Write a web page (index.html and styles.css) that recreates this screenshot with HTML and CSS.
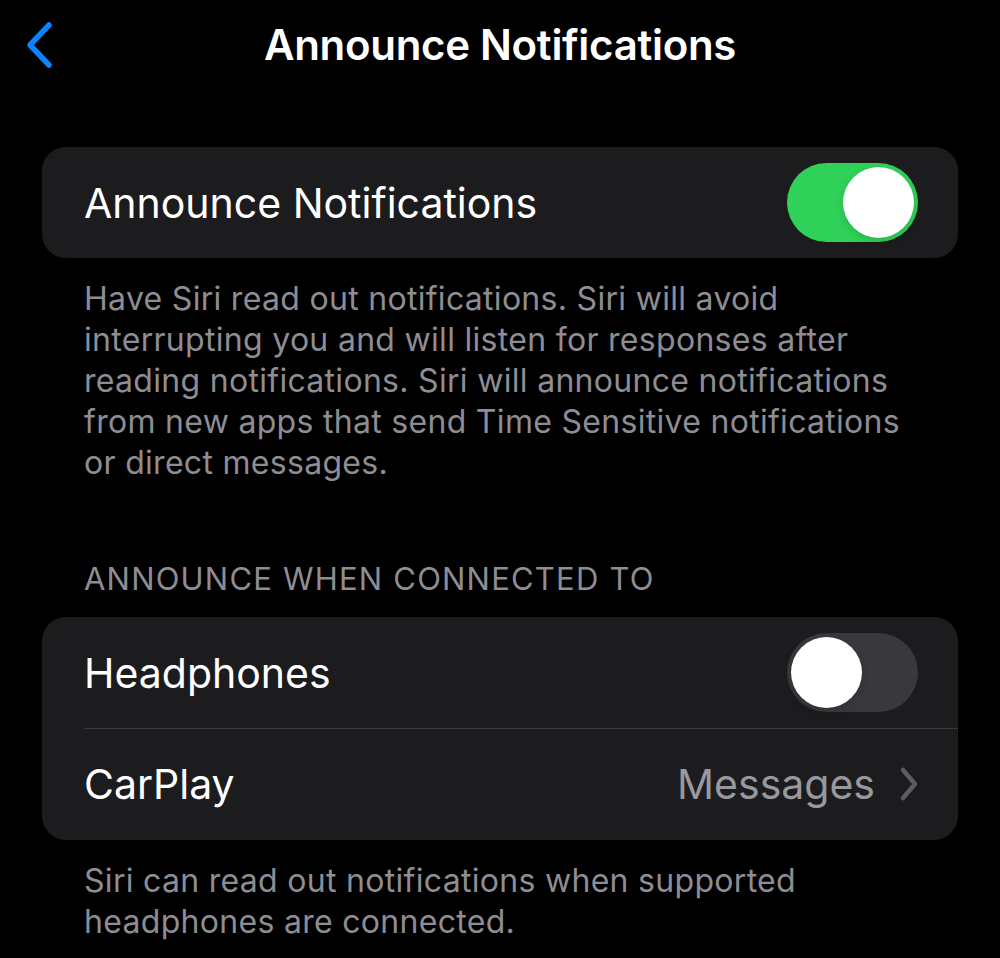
FILE: index.html
```html
<!DOCTYPE html>
<html lang="en">
<head>
    <meta charset="UTF-8">
    <meta name="viewport" content="width=device-width, initial-scale=1.0">
    <title>Announce Notifications</title>
    <link rel="stylesheet" href="styles.css">
</head>
<body>
    <div class="barra">
        <a class="atras" href="#">
            <svg width="34" height="52" viewBox="0 0 34 52">
                <path d="M27 6 L8 26 L27 46" fill="none" stroke="#0a84ff" stroke-width="5.5" stroke-linecap="round" stroke-linejoin="round"/>
            </svg>
        </a>
        <h1 class="titulo">Announce Notifications</h1>
    </div>

    <div class="grupo">
        <div class="fila">
            <span class="etiqueta">Announce Notifications</span>
            <div class="interruptor activo"><div class="perilla"></div></div>
        </div>
    </div>
    <p class="pie">Have Siri read out notifications. Siri will avoid interrupting you and will listen for responses after reading notifications. Siri will announce notifications from new apps that send Time Sensitive notifications or direct messages.</p>

    <div class="cabecera">ANNOUNCE WHEN CONNECTED TO</div>
    <div class="grupo">
        <div class="fila">
            <span class="etiqueta">Headphones</span>
            <div class="interruptor"><div class="perilla"></div></div>
        </div>
        <div class="fila">
            <span class="etiqueta">CarPlay</span>
            <span class="valor">Messages
                <svg width="20" height="36" viewBox="0 0 20 36">
                    <path d="M4 4 L16 18 L4 32" fill="none" stroke="#5b5b60" stroke-width="4.5" stroke-linecap="round" stroke-linejoin="round"/>
                </svg>
            </span>
        </div>
    </div>
    <p class="pie">Siri can read out notifications when supported headphones are connected.</p>
</body>
</html>
```

FILE: styles.css
```css
body {
    font-family: Inter, "Liberation Sans", sans-serif;
    background-color: #000;
    color: #fff;
    margin: 0;
    width: 1000px;
    height: 958px;
    overflow: hidden;
}

.barra {
    height: 92px;
    display: flex;
    align-items: center;
    justify-content: center;
    position: relative;
}

.atras {
    position: absolute;
    left: 22px;
    top: 19px;
    display: flex;
}

.titulo {
    margin: 0 0 3px;
    font-size: 42px;
    line-height: 50px;
    font-weight: 600;
    letter-spacing: -0.3px;
}

.grupo {
    background: #1c1c1e;
    border-radius: 24px;
    margin: 55px 42px 0;
    overflow: hidden;
}

.fila {
    height: 111px;
    display: flex;
    align-items: center;
    justify-content: space-between;
    padding: 0 40px 0 42px;
    position: relative;
}

.fila + .fila {
    height: 112px;
}

.fila + .fila::before {
    content: "";
    position: absolute;
    top: 0;
    left: 42px;
    right: 0;
    height: 1px;
    background: #38383a;
}

.etiqueta {
    font-size: 41px;
}

.interruptor {
    width: 131px;
    height: 79px;
    border-radius: 40px;
    background: #39393d;
    padding: 4px;
    box-sizing: border-box;
    display: flex;
}

.interruptor.activo {
    background: #30d158;
    justify-content: flex-end;
}

.perilla {
    width: 71px;
    height: 71px;
    border-radius: 50%;
    background: #fff;
    box-shadow: 0 3px 8px rgba(0, 0, 0, 0.15);
}

.valor {
    display: flex;
    align-items: center;
    gap: 24px;
    font-size: 41px;
    color: #98989f;
    margin-right: -1px;
}

.pie {
    margin: 20px 84px 0;
    font-size: 32px;
    line-height: 41px;
    letter-spacing: 0.3px;
    color: #8d8d93;
}

.cabecera {
    margin: 78px 84px 0;
    font-size: 31px;
    line-height: 36px;
    letter-spacing: 1.2px;
    color: #8d8d93;
}

.cabecera + .grupo {
    margin-top: 20px;
}
```
